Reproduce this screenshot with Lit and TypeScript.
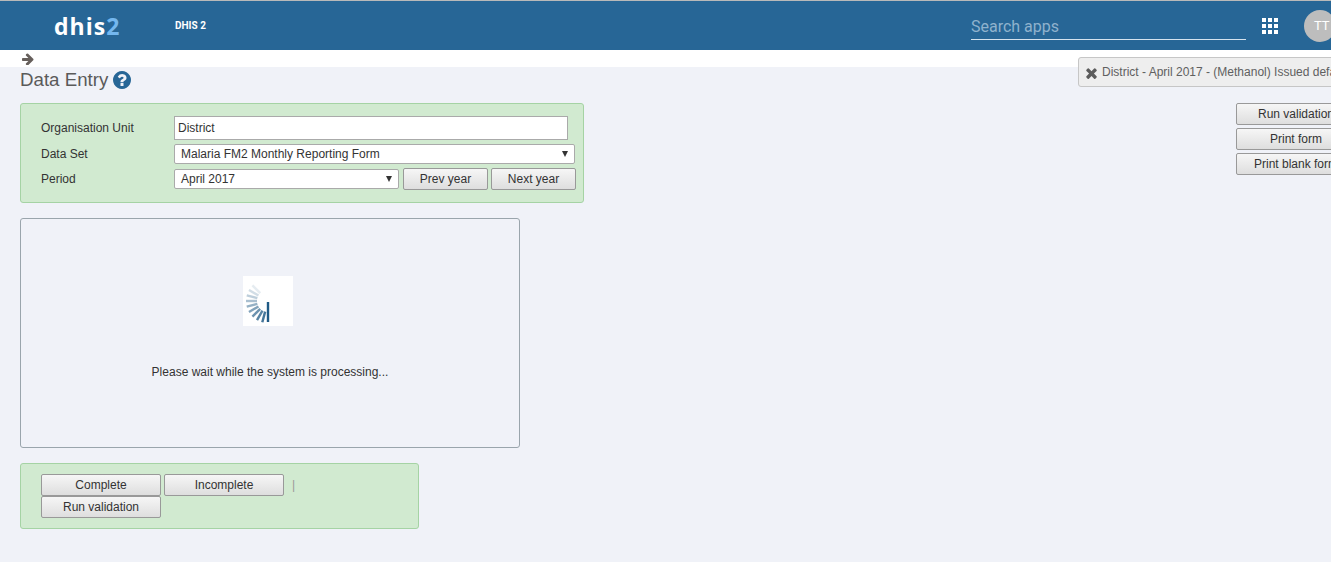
import { LitElement, html, css, svg } from "lit";
import { customElement } from "lit/decorators.js";

const bars = [0, 1, 2, 3, 4, 5, 6, 7, 8, 9].map((i) => {
  const a = (i * 15 * Math.PI) / 180;
  const r0 = i === 0 ? 1 : 11;
  const r1 = i === 0 ? 21 : 22;
  return {
    x1: 25 - Math.sin(a) * r0,
    y1: 25 + Math.cos(a) * r0,
    x2: 25 - Math.sin(a) * r1,
    y2: 25 + Math.cos(a) * r1,
    o: i === 0 ? 1 : Math.max(0.1, 0.92 - i * 0.09),
  };
});

@customElement("app-root")
export class AppRoot extends LitElement {
  static styles = css`
    :host {
      display: block;
      width: 1331px;
      height: 562px;
      overflow: hidden;
      position: relative;
      background: #f0f2f8;
      font-family: "Liberation Sans", Arial, sans-serif;
      font-size: 12px;
      color: #333;
    }
    .header {
      box-sizing: border-box;
      height: 50px;
      background: #276696;
      border-top: 1px solid #b9b9b9;
      display: flex;
      align-items: center;
      color: #fff;
    }
    .logo {
      flex: none;
      margin-left: 54px;
      width: 121px;
      font-family: "Open Sans", sans-serif;
      font-weight: 700;
      font-size: 23px;
      letter-spacing: 1px;
      line-height: 46px;
    }
    .logo span { color: #74b7ee; }
    .instance {
      font-family: Roboto, sans-serif;
      font-weight: 700;
      font-size: 10px;
      flex: 0 0 796px;
    }
    .search {
      flex: none;
      box-sizing: border-box;
      width: 275px;
      height: 23px;
      margin-top: 5px;
      border-bottom: 1px solid #d5e3ee;
      font-family: Roboto, sans-serif;
      font-size: 16px;
      line-height: 19px;
      color: #8fb2cd;
    }
    .apps {
      flex: none;
      display: grid;
      grid-template-columns: repeat(3, 4px);
      grid-auto-rows: 4px;
      gap: 2px;
      margin-left: 16px;
      margin-top: 1px;
    }
    .apps i { background: #fff; }
    .avatar {
      flex: none;
      box-sizing: border-box;
      width: 32px;
      height: 32px;
      margin-left: 26px;
      border-radius: 50%;
      background: #bdbdbd;
      font-family: Roboto, sans-serif;
      font-size: 13px;
      line-height: 32px;
      padding-left: 10px;
      white-space: nowrap;
    }
    .strip {
      height: 17px;
      background: #fff;
      padding: 3px 0 0 22px;
      box-sizing: border-box;
    }
    .strip svg { display: block; width: 12px; height: 12px; fill: #665f5b; }
    .notice {
      position: absolute;
      left: 1078px;
      top: 57px;
      box-sizing: border-box;
      width: 300px;
      height: 30px;
      padding: 0 0 0 6px;
      display: flex;
      align-items: center;
      gap: 4px;
      background: #eee;
      border: 1px solid #c6c6c6;
      border-radius: 3px;
      color: #606060;
      white-space: nowrap;
    }
    .notice svg { width: 13px; height: 16px; fill: #5c5c5c; flex: none; margin-top: 2px; }
    .main {
      display: flex;
      justify-content: space-between;
      padding-left: 20px;
    }
    .title {
      display: flex;
      align-items: center;
      gap: 5px;
      height: 26px;
      margin-bottom: 10px;
      font-size: 18.7px;
      color: #5a5a5a;
    }
    .title svg { width: 18px; height: 18px; fill: #276696; }
    .panel {
      box-sizing: border-box;
      background: #d1ead0;
      border: 1px solid #a5d3a4;
      border-radius: 3px;
    }
    .filters {
      width: 564px;
      height: 100px;
      padding: 12px 0 0 20px;
      display: grid;
      grid-template-columns: 133px auto;
      grid-template-rows: 24px 20px 22px;
      row-gap: 4px;
      align-items: center;
      justify-content: start;
    }
    .field {
      box-sizing: border-box;
      width: 394px;
      height: 24px;
      background: #fff;
      border: 1px solid #aaa;
      padding: 0 3px;
      line-height: 22px;
    }
    .select {
      box-sizing: border-box;
      height: 20px;
      background: #fff;
      border: 1px solid #aaa;
      border-radius: 2px;
      padding: 0 6px 0 6px;
      display: flex;
      align-items: center;
      justify-content: space-between;
    }
    .select svg { width: 6px; height: 6px; fill: #333; flex: none; }
    .wide { width: 401px; }
    .period-row { display: flex; align-items: center; gap: 3px; }
    .period { width: 225px; margin-right: 1px; }
    button {
      box-sizing: border-box;
      height: 22px;
      margin: 0;
      padding: 0;
      font: inherit;
      color: #333;
      background: linear-gradient(#f6f6f6, #dedede);
      border: 1px solid #999;
      border-radius: 2px;
    }
    .year { width: 85px; }
    .loader {
      box-sizing: border-box;
      width: 500px;
      height: 230px;
      margin-top: 15px;
      border: 1px solid #9aa5ac;
      border-radius: 3px;
      padding-top: 57px;
      display: flex;
      flex-direction: column;
      align-items: center;
      gap: 39px;
    }
    .spin { width: 50px; height: 50px; background: #fff; display: block; margin-right: 4px; }
    .actions {
      width: 399px;
      height: 66px;
      margin-top: 15px;
      padding: 10px 0 0 20px;
    }
    .act-row { display: flex; align-items: center; height: 22px; gap: 3px; }
    .act { width: 120px; }
    .sep { margin-left: 5px; color: #999; }
    .side {
      display: flex;
      flex-direction: column;
      gap: 3px;
      margin-top: 36px;
      margin-right: -25px;
    }
    .side button { width: 120px; white-space: nowrap; }
  `;

  render() {
    return html`
      <div class="header">
        <div class="logo">dhis<span>2</span></div>
        <div class="instance">DHIS 2</div>
        <div class="search">Search apps</div>
        <div class="apps">${Array.from({ length: 9 }, () => html`<i></i>`)}</div>
        <div class="avatar">TT</div>
      </div>
      <div class="strip">
        <svg viewBox="128 128 1536 1536"><path d="M1600 960q0 54-37 91l-651 651q-39 37-91 37-51 0-90-37l-75-75q-38-38-38-91t38-91l293-293h-704q-52 0-84.500-37.500t-32.500-90.500v-128q0-53 32.500-90.500t84.500-37.500h704l-293-294q-38-36-38-90t38-90l75-75q38-38 90-38 53 0 91 38l651 651q37 35 37 90z"/></svg>
      </div>
      <div class="notice">
        <svg viewBox="0 0 1408 1792"><path d="M1298 1322q0 40-28 68l-136 136q-28 28-68 28t-68-28l-294-294-294 294q-28 28-68 28t-68-28l-136-136q-28-28-28-68t28-68l294-294-294-294q-28-28-28-68t28-68l136-136q28-28 68-28t68 28l294 294 294-294q28-28 68-28t68 28l136 136q28 28 28 68t-28 68l-294 294 294 294q28 28 28 68z"/></svg>
        <span>District - April 2017 - (Methanol) Issued default</span>
      </div>
      <div class="main">
        <div>
          <div class="title">
            <span>Data Entry</span>
            <svg viewBox="128 128 1536 1536"><path d="M1024 1376v-192q0-14-9-23t-23-9h-192q-14 0-23 9t-9 23v192q0 14 9 23t23 9h192q14 0 23-9t9-23zm256-672q0-88-55.500-163t-138.500-116-170-41q-243 0-371 213-15 24 8 42l132 100q7 6 19 6 16 0 25-12 53-68 86-92 34-24 86-24 48 0 85.500 26t37.500 59q0 38-20 61t-68 45q-63 28-115.500 86.500t-52.500 125.500v36q0 14 9 23t23 9h192q14 0 23-9t9-23q0-19 21.500-49.500t54.500-49.500q32-18 49-28.500t46-35 44.500-48 28-60.500 12.500-81zm384 192q0 209-103 385.500t-279.500 279.500-385.500 103-385.500-103-279.500-279.500-103-385.500 103-385.500 279.500-279.500 385.500-103 385.500 103 279.500 279.500 103 385.500z"/></svg>
          </div>
          <div class="panel filters">
            <div>Organisation Unit</div>
            <div class="field">District</div>
            <div>Data Set</div>
            <div class="select wide">
              <span>Malaria FM2 Monthly Reporting Form</span>
              <svg viewBox="0 0 8 6" preserveAspectRatio="none"><path d="M0 0h8L4 6z"/></svg>
            </div>
            <div>Period</div>
            <div class="period-row">
              <div class="select period">
                <span>April 2017</span>
                <svg viewBox="0 0 8 6" preserveAspectRatio="none"><path d="M0 0h8L4 6z"/></svg>
              </div>
              <button class="year">Prev year</button>
              <button class="year">Next year</button>
            </div>
          </div>
          <div class="loader">
            <svg class="spin" viewBox="0 0 50 50">
              ${bars.map(
                (b) => svg`<line x1=${b.x1} y1=${b.y1} x2=${b.x2} y2=${b.y2} stroke="#1f5a85" stroke-width="2.4" opacity=${b.o}></line>`
              )}
            </svg>
            <div>Please wait while the system is processing...</div>
          </div>
          <div class="panel actions">
            <div class="act-row">
              <button class="act">Complete</button>
              <button class="act">Incomplete</button>
              <span class="sep">|</span>
            </div>
            <div class="act-row">
              <button class="act">Run validation</button>
            </div>
          </div>
        </div>
        <div class="side">
          <button>Run validation</button>
          <button>Print form</button>
          <button>Print blank form</button>
        </div>
      </div>
    `;
  }
}
